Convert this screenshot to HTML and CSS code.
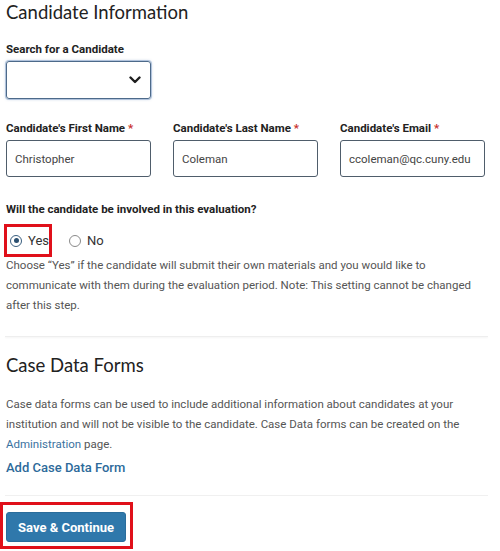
FILE: index.html
```html
<!DOCTYPE html>
<html>
<head>
<meta charset="utf-8">
<link rel="stylesheet" href="styles.css">
</head>
<body>
<div class="page">
  <h2 class="title">Candidate Information</h2>
  <div class="field search">
    <div class="lbl">Search for a Candidate</div>
    <div class="select">
      <svg class="chev" width="12" height="8" viewBox="0 0 12 8"><path d="M1.5 1.5 L6 6 L10.5 1.5" fill="none" stroke="#1e1e1e" stroke-width="2.4" stroke-linecap="round" stroke-linejoin="round"/></svg>
    </div>
  </div>
  <div class="row3">
    <div class="field">
      <div class="lbl">Candidate's First Name <span class="req">*</span></div>
      <div class="input">Christopher</div>
    </div>
    <div class="field">
      <div class="lbl">Candidate's Last Name <span class="req">*</span></div>
      <div class="input">Coleman</div>
    </div>
    <div class="field">
      <div class="lbl">Candidate's Email <span class="req">*</span></div>
      <div class="input">ccoleman@qc.cuny.edu</div>
    </div>
  </div>
  <div class="lbl question">Will the candidate be involved in this evaluation?</div>
  <div class="radios">
    <div class="hl-yes"><span class="radio on"></span><span class="rtext">Yes</span></div>
    <div class="opt"><span class="radio"></span><span class="rtext">No</span></div>
  </div>
  <p class="text help">Choose “Yes” if the candidate will submit their own materials and you would like to communicate with them during the evaluation period. Note: This setting cannot be changed after this step.</p>
  <div class="divider"></div>
  <h2 class="title second">Case Data Forms</h2>
  <p class="text">Case data forms can be used to include additional information about candidates at your institution and will not be visible to the candidate. Case Data forms can be created on the <a class="link" href="#">Administration</a> page.</p>
  <a class="add" href="#">Add Case Data Form</a>
  <div class="divider foot"></div>
  <div class="hl-btn"><button class="btn">Save &amp; Continue</button></div>
</div>
</body>
</html>
```

FILE: styles.css
```css
* { box-sizing: border-box; }
body {
  margin: 0;
  background: #fff;
  font-family: Roboto, "Liberation Sans", sans-serif;
  color: #222;
}
.page {
  width: 490px;
  padding: 0 0 0 6px;
}
.title {
  font-family: Lato, "Open Sans", sans-serif;
  font-weight: 400;
  font-size: 18.5px;
  line-height: 24px;
  color: #222;
  margin: 0;
}
.lbl {
  font-size: 11.5px;
  font-weight: 700;
  line-height: 16px;
  color: #222;
}
.req { color: #c9302c; }
.search { margin-top: 17px; }
.search .lbl { margin-bottom: 4px; }
.select {
  width: 145px;
  height: 38px;
  border: 1px solid #4d6a8a;
  border-radius: 3px;
  box-shadow: 0 0 0 1px rgba(90,130,180,0.35), 0 0 3px rgba(80,120,180,0.5);
  display: flex;
  align-items: center;
  justify-content: flex-end;
  padding-right: 9px;
}
.row3 {
  display: grid;
  grid-template-columns: 145px 145px 145px;
  column-gap: 22px;
  margin-top: 21px;
}
.row3 .lbl { margin-bottom: 4px; }
.input {
  height: 37px;
  border: 1px solid #4f5d6b;
  border-radius: 3px;
  font-size: 11.5px;
  color: #444;
  display: flex;
  align-items: center;
  padding-left: 8px;
}
.question { margin-top: 24px; }
.radios {
  display: flex;
  align-items: center;
  margin-top: 7px;
  margin-left: -2px;
}
.hl-yes {
  width: 48px;
  height: 33px;
  border: 3px solid #e0101a;
  display: flex;
  align-items: center;
  padding-left: 3px;
}
.opt {
  display: flex;
  align-items: center;
  margin-left: 17px;
}
.radio {
  width: 12px;
  height: 12px;
  border: 1.5px solid #8a8a8a;
  border-radius: 50%;
  display: inline-flex;
  align-items: center;
  justify-content: center;
  margin-right: 6px;
  background: #fff;
}
.radio.on { border-color: #3a5f80; }
.radio.on::after {
  content: "";
  width: 5px;
  height: 5px;
  border-radius: 50%;
  background: #2a4f70;
}
.rtext {
  font-size: 13px;
  color: #333;
}
.text {
  font-size: 11.5px;
  line-height: 20px;
  color: #555;
  margin: 0;
  width: 470px;
}
.help { margin-top: -2px; }
.divider {
  width: 483px;
  margin-left: -1px;
  height: 1px;
  background: #eee;
  box-shadow: 0 1px 2px rgba(0,0,0,0.06);
  margin-top: 21px;
}
.second { margin-top: 16px; }
.second + .text { margin-top: 17px; }
.link { color: #3a72a0; text-decoration: none; }
.add {
  display: block;
  margin-top: 6px;
  font-size: 13px;
  color: #2d6a9a;
  text-decoration: none;
  font-weight: 500;
}
.foot { margin-top: 20px; box-shadow: none; background: #f0f0f0; }
.hl-btn {
  width: 133px;
  height: 47px;
  border: 3px solid #e0101a;
  margin-left: -6px;
  margin-top: 6px;
  padding: 7px 0 0 3px;
}
.btn {
  width: 120px;
  height: 30px;
  border: 1px solid #2a6d9c;
  border-radius: 3px;
  background: #2f78ab;
  color: #fff;
  font-family: Roboto, "Liberation Sans", sans-serif;
  font-weight: 700;
  font-size: 13px;
  padding: 0;
}
```
